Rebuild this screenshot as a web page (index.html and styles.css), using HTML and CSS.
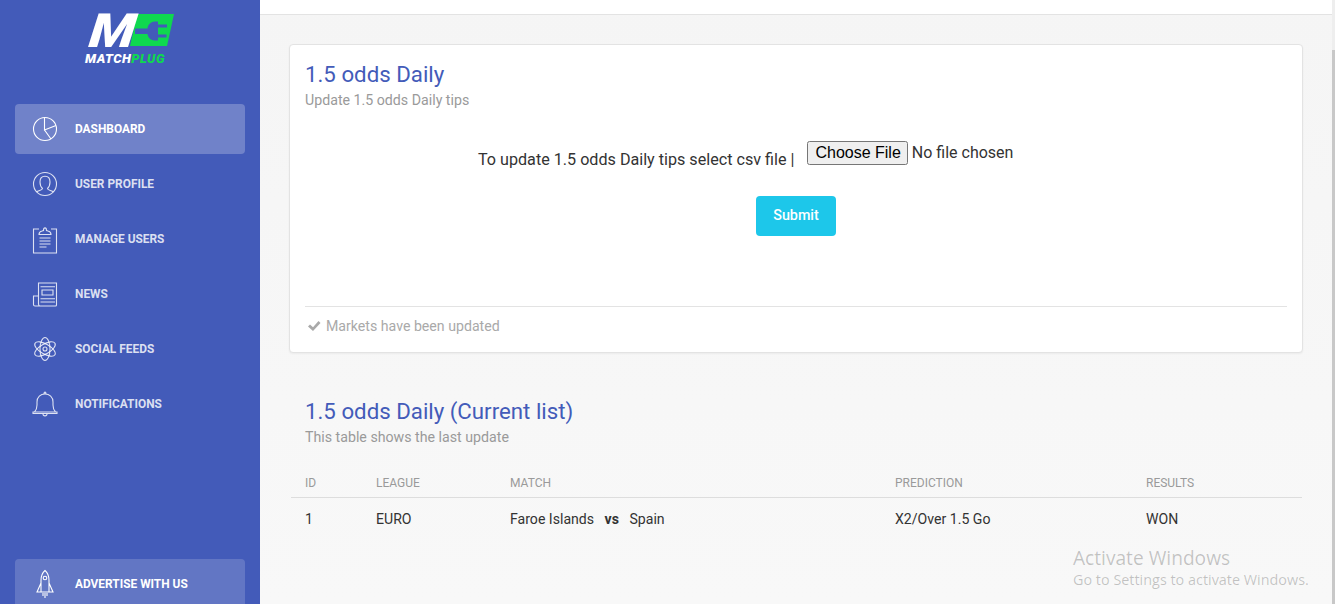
FILE: index.html
```html
<!DOCTYPE html>
<html lang="en">
<head>
<meta charset="utf-8">
<title>1.5 odds Daily</title>
<link rel="stylesheet" href="styles.css">
</head>
<body>
<div class="wrapper">
  <aside class="sidebar">
    <div class="logo">
      <div class="logo-mark">
        <svg class="logo-plate" viewBox="0 0 90 36" width="90" height="36" aria-hidden="true">
          <polygon points="52,1 89,1 82,33 45,33" fill="#0fd84f"/>
          <path d="M50 15.500h12.500c.5-4 3-6.500 7-7h3.500v3h9v3h-9v7h8.500v3h-8.500v3h-3.500c-4-.5-6.500-3-7-6.500H50z" fill="#435bb9"/>
        </svg>
        <span class="logo-m">M</span>
      </div>
      <div class="logo-name"><span>MATCH</span><span class="logo-plug">PLUG</span></div>
    </div>
    <nav class="nav">
      <a class="nav-item active">
        <svg class="nav-icon" viewBox="0 0 30 30" aria-hidden="true"><circle cx="15" cy="15" r="11.500"/><path d="M14.500 3.500V16L26 11.500M14.500 16L21 25"/></svg>
        <span>Dashboard</span>
      </a>
      <a class="nav-item">
        <svg class="nav-icon" viewBox="0 0 30 30" aria-hidden="true"><circle cx="15" cy="15" r="11.500"/><path d="M6.500 23c1.500-1.800 6-1.500 6-3.500C10.800 18 10 16 10 13c0-3.500 2-5.700 5-5.700s5 2.200 5 5.700c0 3-.8 5-2.500 6.500 0 2 4.500 1.700 6 3.500"/></svg>
        <span>User Profile</span>
      </a>
      <a class="nav-item">
        <svg class="nav-icon" viewBox="0 0 30 30" aria-hidden="true"><path d="M9 5H3.500v24h23V5H21"/><path d="M9 10.500c0-2 1-3 3-3.500l1.500-.5c0-3.500 3-3.500 3 0l1.500.5c2 .5 3 1.500 3 3.500zM9.500 14h11M9.500 17h11M9.500 20h11M9.500 23h7"/></svg>
        <span>Manage Users</span>
      </a>
      <a class="nav-item">
        <svg class="nav-icon" viewBox="0 0 30 30" aria-hidden="true"><path d="M8.500 25V4h18v22c0 .5-.5 1-1 1H5c-1 0-1.500-.7-1.500-1.500V17h5v8c0 1 .5 2 1.500 2"/><path d="M12 11h11v5H12zM10.500 7.700h14.500M10.500 19.700h14.500M10.500 23h14.500"/></svg>
        <span>News</span>
      </a>
      <a class="nav-item">
        <svg class="nav-icon" viewBox="0 0 30 30" aria-hidden="true"><ellipse cx="15" cy="15" rx="5" ry="11.500"/><ellipse cx="15" cy="15" rx="5" ry="11.500" transform="rotate(60 15 15)"/><ellipse cx="15" cy="15" rx="5" ry="11.500" transform="rotate(-60 15 15)"/><circle cx="15" cy="15" r="2"/></svg>
        <span>Social Feeds</span>
      </a>
      <a class="nav-item">
        <svg class="nav-icon" viewBox="0 0 30 30" aria-hidden="true"><path d="M4.500 23c2-2 2.500-4 2.500-7v-3c0-5 3.500-8 8-8s8 3 8 8v3c0 3 .5 5 2.500 7zM3 23h24v1.500H3zM13 25c0 2.500 4 2.500 4 0M14 5c0-2.500 2-2.500 2 0"/></svg>
        <span>Notifications</span>
      </a>
    </nav>
    <a class="nav-item promo">
      <svg class="nav-icon" viewBox="0 0 30 30" aria-hidden="true"><path d="M15 1.500c-3 2.500-4 6-4 10V23h8V11.500c0-4-1-7.500-4-10zM11 14l-4 9h4M19 14l4 9h-4M13 24v3M15 24v5M17 24v3"/><circle cx="15" cy="9" r="1.800"/></svg>
      <span>Advertise with us</span>
    </a>
  </aside>
  <main class="main">
    <header class="topbar"></header>
    <section class="content">
      <div class="card">
        <h4 class="title">1.5 odds Daily</h4>
        <p class="category">Update 1.5 odds Daily tips</p>
        <form class="upload">
          <div class="upload-row">
            <label class="upload-label" for="csv">To update 1.5 odds Daily tips select csv file |</label>
            <input class="upload-input" id="csv" type="file">
          </div>
          <button class="submit" type="button">Submit</button>
        </form>
        <div class="card-footer"><svg class="check" viewBox="0 0 14 12" aria-hidden="true"><path d="M1 6.500l2-2 3 2.800L11.500 1l2 2L6 11z"/></svg><span>Markets have been updated</span></div>
      </div>
      <div class="plain">
        <div class="plain-head">
          <h4 class="title">1.5 odds Daily (Current list)</h4>
          <p class="category">This table shows the last update</p>
        </div>
        <div class="table">
          <div class="row head"><span>ID</span><span>League</span><span>Match</span><span>Prediction</span><span>Results</span></div>
          <div class="row"><span>1</span><span>EURO</span><span>Faroe Islands <b class="vs">vs</b> Spain</span><span>X2/Over 1.5 Go</span><span>WON</span></div>
        </div>
      </div>
    </section>
    <div class="watermark">
      <div class="wm-title">Activate Windows</div>
      <div class="wm-sub">Go to Settings to activate Windows.</div>
    </div>
    <div class="scroll-track"><div class="scroll-thumb"></div></div>
  </main>
</div>
</body>
</html>
```

FILE: styles.css
```css
* { box-sizing: border-box; }
html, body { margin: 0; height: 100%; overflow: hidden; }
body { font-family: Roboto, "Liberation Sans", sans-serif; color: #333; background: #f6f6f6; }
.wrapper { display: flex; height: 604px; overflow: hidden; }

.sidebar { width: 260px; flex: none; background: #435bb9; display: flex; flex-direction: column; padding: 0 15px; overflow: hidden; }
.logo { height: 104px; padding-top: 14px; display: flex; flex-direction: column; align-items: center; }
.logo-mark { width: 90px; height: 36px; position: relative; }
.logo-plate { position: absolute; left: 0; top: -1px; }
.logo-m { position: relative; display: block; font: italic 900 47px/34px Roboto, sans-serif; color: #fff; margin-left: 3px; width: 40px; transform: scaleX(1.14) skewX(-6deg); transform-origin: left bottom; }
.logo-name { font: italic 900 13px/12px Roboto, sans-serif; color: #fff; margin-top: 3px; margin-right: 10px; letter-spacing: .45px; }
.logo-plug { color: #0fd84f; }
.nav { flex: 1; display: flex; flex-direction: column; gap: 5px; }
.nav-item { height: 50px; flex: none; display: flex; align-items: center; gap: 15px; padding-left: 15px; border-radius: 4px; color: rgba(255,255,255,.82); font-size: 11.9px; font-weight: 700; text-transform: uppercase; }
.nav-icon { width: 30px; height: 30px; flex: none; fill: none; stroke: currentColor; stroke-width: 1.1; }
.active { background: rgba(255,255,255,.24); color: #fff; }
.promo { background: rgba(255,255,255,.17); color: #fff; margin-bottom: -5px; }

.main { flex: 1; min-width: 0; position: relative; background: linear-gradient(#f5f5f5, #f8f8f8); }
.topbar { height: 15px; background: #fff; border-bottom: 1px solid #e3e3e3; }
.content { padding: 29px 32px 0 29px; }
.card { height: 309px; background: #fff; border: 1px solid #e3e3e3; border-radius: 4px; padding: 14px 15px 0; box-shadow: 0 1px 2px rgba(0,0,0,.05); }
.title { margin: 0; color: #435bb9; font-size: 22.25px; line-height: 30px; font-weight: 400; }
.category { margin: 1px 0 0; color: #9a9a9a; font-size: 14.2px; line-height: 20px; }
.upload { height: 196px; display: flex; flex-direction: column; align-items: center; padding-top: 31px; }
.upload-row { display: flex; width: 648px; align-items: flex-start; gap: 13px; margin-left: 12px; }
.upload-label { font-size: 16.15px; line-height: 20px; padding-top: 9px; color: #333; }
.upload-input { font: 16px Roboto, sans-serif; color: #333; }
.upload-input::file-selector-button { font: 16px "Liberation Sans", sans-serif; padding: 1px 5px 1px 6px; }
.submit { margin-top: 26px; width: 80px; height: 40px; padding: 0 0 2px; border: 0; border-radius: 4px; background: #1dc7ea; color: #fff; font: 500 14.3px Roboto, sans-serif; }
.card-footer { border-top: 1px solid #e3e3e3; padding-top: 9px; padding-left: 2px; display: flex; align-items: center; gap: 5px; color: #a9a9a9; font-size: 14.15px; line-height: 20px; }
.check { width: 14px; height: 12px; fill: #a9a9a9; }

.plain { margin-top: 43px; margin-left: 2px; margin-right: 1px; }
.plain-head { padding-left: 14px; }
.table { margin-top: 20px; }
.row { display: grid; grid-template-columns: 71px 134px 385px 251px 1fr; padding-left: 14px; align-items: center; height: 42px; font-size: 14.1px; color: #333; }
.head { height: 31px; padding-top: 2px; border-bottom: 1px solid #ddd; font-size: 12px; color: #9a9a9a; text-transform: uppercase; }
.vs { margin: 0 7px; }

.watermark { position: absolute; left: 813px; top: 546px; font-family: "Open Sans", sans-serif; color: rgba(0,0,0,.22); }
.wm-title { font-size: 19.15px; line-height: 24px; }
.wm-sub { font-size: 14.4px; line-height: 20px; }
.scroll-track { position: absolute; right: 0; top: 0; bottom: 0; width: 3px; background: #eeeeee; padding-top: 50px; }
.scroll-thumb { height: 100%; background: #c8c8c8; }
```
